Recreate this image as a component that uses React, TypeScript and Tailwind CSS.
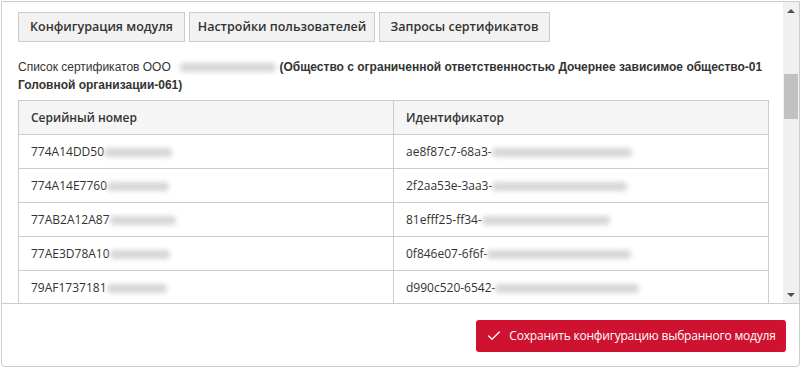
import { Check } from 'lucide-react';

const rows = [
  { serial: '774A14DD50', sBlur: 68, id: 'ae8f87c7-68a3-', iBlur: 140 },
  { serial: '774A14E7760', sBlur: 62, id: '2f2aa53e-3aa3-', iBlur: 135 },
  { serial: '77AB2A12A87', sBlur: 66, id: '81efff25-ff34-', iBlur: 128 },
  { serial: '77AE3D78A10', sBlur: 60, id: '0f846e07-6f6f-', iBlur: 144 },
  { serial: '79AF1737181', sBlur: 60, id: 'd990c520-6542-', iBlur: 144 },
];

function Blur({ w, className = '' }: { w: number; className?: string }) {
  return (
    <span
      className={`inline-block h-[9px] align-middle rounded-sm bg-[#d6d6d6] blur-[2.5px] ${className}`}
      style={{ width: w }}
    />
  );
}

const tabs = ['Конфигурация модуля', 'Настройки пользователей', 'Запросы сертификатов'];
const tabW = ['w-[167px]', 'w-[186px]', 'w-[171px]'];

function Scrollbar() {
  return (
    <div className="flex w-[16px] flex-col bg-[#f0f0f0]">
      <div className="flex h-[17px] items-center justify-center">
        <div className="h-0 w-0 border-x-[4px] border-b-[4px] border-x-transparent border-b-[#505050]" />
      </div>
      <div className="flex-1">
        <div className="mx-auto mt-[55px] h-[45px] w-[14px] bg-[#c1c1c1]" />
      </div>
      <div className="flex h-[17px] items-center justify-center">
        <div className="h-0 w-0 border-x-[4px] border-t-[4px] border-x-transparent border-t-[#505050]" />
      </div>
    </div>
  );
}

export default function App() {
  return (
    <div className="h-[368px] w-[802px] bg-white p-px pr-[2px] font-['Open_Sans',sans-serif] text-[#333]">
      <div className="flex h-[366px] flex-col rounded-b-[4px] border border-[#cccccc]">
        <div className="flex h-[301px] overflow-hidden">
          <div className="flex-1 overflow-hidden pl-[16px] pr-[14px] pt-[10px]">
            <div className="flex gap-[4px]">
              {tabs.map((t, i) => (
                <div
                  key={t}
                  className={`${tabW[i]} flex h-[30px] items-center justify-center border border-[#cccccc] bg-[#f2f2f2] text-[12.5px] font-semibold text-[#333]`}
                >
                  {t}
                </div>
              ))}
            </div>
            <p className="mt-[16px] font-['Liberation_Sans'] text-[12px] leading-[18px]">
              Список сертификатов ООО <Blur w={96} className="ml-[6px]" />{' '}
              <b>(Общество с ограниченной ответственностью Дочернее зависимое общество-01 Головной организации-061)</b>
            </p>
            <table className="mt-[6px] w-full border-collapse text-[12px]">
              <thead>
                <tr className="h-[34px] bg-[#f5f5f5]">
                  <th className="w-[375px] border border-[#cccccc] px-[12px] text-left font-semibold">Серийный номер</th>
                  <th className="border border-[#cccccc] px-[12px] text-left font-semibold">Идентификатор</th>
                </tr>
              </thead>
              <tbody>
                {rows.map((r) => (
                  <tr key={r.serial} className="h-[34px]">
                    <td className="border border-[#cccccc] px-[12px]">
                      {r.serial}
                      <Blur w={r.sBlur} />
                    </td>
                    <td className="border border-[#cccccc] px-[12px]">
                      {r.id}
                      <Blur w={r.iBlur} />
                    </td>
                  </tr>
                ))}
              </tbody>
            </table>
          </div>
          <Scrollbar />
        </div>
        <div className="flex flex-1 items-start justify-end border-t border-[#cccccc] pr-[13px] pt-[16px]">
          <button className="flex h-[32px] w-[310px] items-center justify-center gap-[7px] whitespace-nowrap rounded-[3px] bg-[#cf1230] text-[12px] tracking-[-0.2px] text-white">
            <Check size={16} strokeWidth={2} />
            Сохранить конфигурацию выбранного модуля
          </button>
        </div>
      </div>
    </div>
  );
}
